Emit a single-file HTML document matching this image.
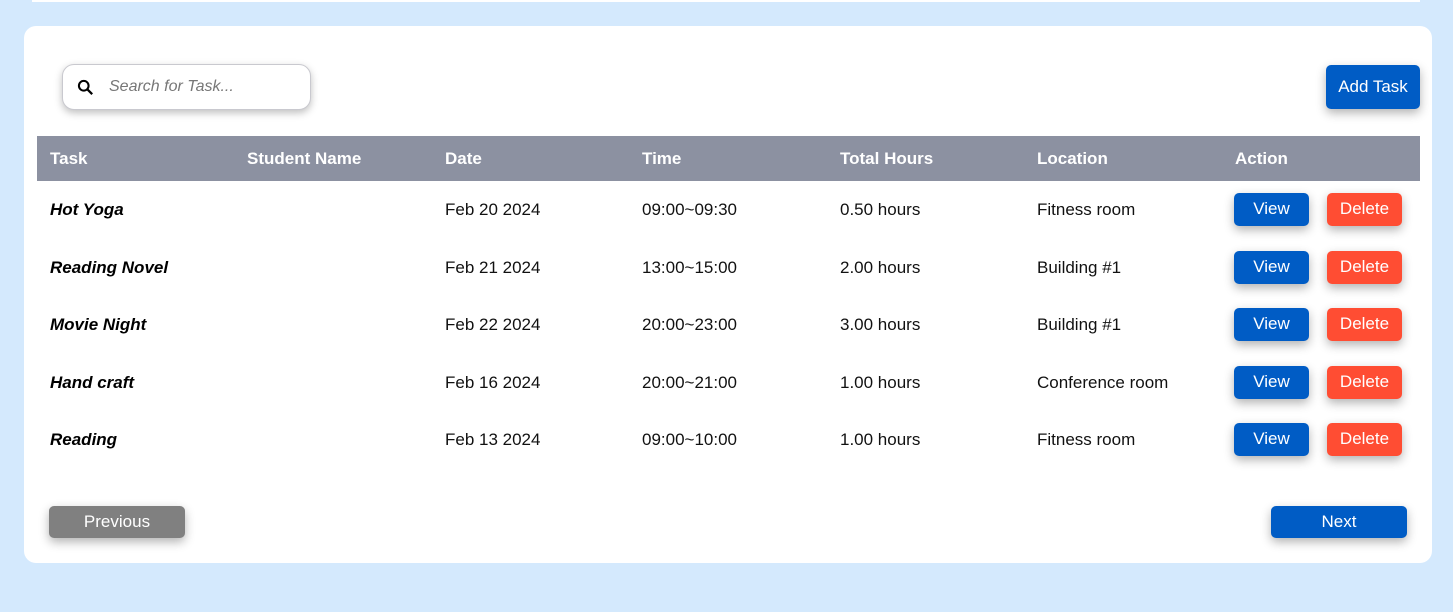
<!DOCTYPE html>
<html><head><meta charset="utf-8"><style>
*{margin:0;padding:0;box-sizing:border-box}
body{width:1453px;height:612px;background:#d4e9fd;font-family:"Liberation Sans",Arial,sans-serif;position:relative;overflow:hidden}
.top{position:absolute;left:32px;top:0;width:1388px;height:2px;background:#fff}
.card{position:absolute;left:24px;top:26px;width:1408px;height:537px;background:#fff;border-radius:12px}
.search{position:absolute;left:62px;top:64px;width:249px;height:46px;border:1px solid #c9c9cf;border-radius:12px;box-shadow:0 3px 8px rgba(0,0,0,.25);background:#fff}
.search svg{position:absolute;left:14px;top:14px}
.search span{position:absolute;left:46px;top:13px;font-size:16px;font-style:italic;color:#777}
.btn{position:absolute;color:#fff;font-size:16px;text-align:center;border-radius:5px;box-shadow:0 4px 10px rgba(0,0,0,.3)}
.blue{background:#005cc5}
.red{background:#ff4d33}
.gray{background:#808080}
.head{position:absolute;left:37px;top:136px;width:1383px;height:45px;background:#8c91a1}
.hc{position:absolute;top:149px;color:#fff;font-weight:bold;font-size:17px}
.c{position:absolute;font-size:17px;color:#111}
.t{font-weight:bold;font-style:italic;color:#000}
</style></head><body>
<div class="top"></div>
<div class="card"></div>
<div class="search"><svg width="18" height="18" viewBox="0 0 16 16"><circle cx="6" cy="6" r="4.3" fill="none" stroke="#000" stroke-width="1.8"/><path d="M9.2 9.2L13.5 13.5" stroke="#000" stroke-width="2"/></svg><span>Search for Task...</span></div>
<div class="btn blue" style="left:1326px;top:65px;width:94px;height:44px;line-height:44px;font-size:17px">Add Task</div>
<div class="head"></div>
<div class="hc" style="left:50px">Task</div>
<div class="hc" style="left:247px">Student Name</div>
<div class="hc" style="left:445px">Date</div>
<div class="hc" style="left:642px">Time</div>
<div class="hc" style="left:840px">Total Hours</div>
<div class="hc" style="left:1037px">Location</div>
<div class="hc" style="left:1235px">Action</div>

<div class="c t" style="left:50px;top:200px">Hot Yoga</div>
<div class="c" style="left:445px;top:200px">Feb 20 2024</div>
<div class="c" style="left:642px;top:200px">09:00~09:30</div>
<div class="c" style="left:840px;top:200px">0.50 hours</div>
<div class="c" style="left:1037px;top:200px">Fitness room</div>
<div class="btn blue" style="left:1234px;top:193px;width:75px;height:33px;line-height:31px;font-size:17px">View</div>
<div class="btn red" style="left:1327px;top:193px;width:75px;height:33px;line-height:31px;font-size:17px">Delete</div>

<div class="c t" style="left:50px;top:258px">Reading Novel</div>
<div class="c" style="left:445px;top:258px">Feb 21 2024</div>
<div class="c" style="left:642px;top:258px">13:00~15:00</div>
<div class="c" style="left:840px;top:258px">2.00 hours</div>
<div class="c" style="left:1037px;top:258px">Building #1</div>
<div class="btn blue" style="left:1234px;top:251px;width:75px;height:33px;line-height:31px;font-size:17px">View</div>
<div class="btn red" style="left:1327px;top:251px;width:75px;height:33px;line-height:31px;font-size:17px">Delete</div>

<div class="c t" style="left:50px;top:315px">Movie Night</div>
<div class="c" style="left:445px;top:315px">Feb 22 2024</div>
<div class="c" style="left:642px;top:315px">20:00~23:00</div>
<div class="c" style="left:840px;top:315px">3.00 hours</div>
<div class="c" style="left:1037px;top:315px">Building #1</div>
<div class="btn blue" style="left:1234px;top:308px;width:75px;height:33px;line-height:31px;font-size:17px">View</div>
<div class="btn red" style="left:1327px;top:308px;width:75px;height:33px;line-height:31px;font-size:17px">Delete</div>

<div class="c t" style="left:50px;top:373px">Hand craft</div>
<div class="c" style="left:445px;top:373px">Feb 16 2024</div>
<div class="c" style="left:642px;top:373px">20:00~21:00</div>
<div class="c" style="left:840px;top:373px">1.00 hours</div>
<div class="c" style="left:1037px;top:373px">Conference room</div>
<div class="btn blue" style="left:1234px;top:366px;width:75px;height:33px;line-height:31px;font-size:17px">View</div>
<div class="btn red" style="left:1327px;top:366px;width:75px;height:33px;line-height:31px;font-size:17px">Delete</div>

<div class="c t" style="left:50px;top:430px">Reading</div>
<div class="c" style="left:445px;top:430px">Feb 13 2024</div>
<div class="c" style="left:642px;top:430px">09:00~10:00</div>
<div class="c" style="left:840px;top:430px">1.00 hours</div>
<div class="c" style="left:1037px;top:430px">Fitness room</div>
<div class="btn blue" style="left:1234px;top:423px;width:75px;height:33px;line-height:31px;font-size:17px">View</div>
<div class="btn red" style="left:1327px;top:423px;width:75px;height:33px;line-height:31px;font-size:17px">Delete</div>

<div class="btn gray" style="left:49px;top:506px;width:136px;height:32px;line-height:31px;font-size:17px">Previous</div>
<div class="btn blue" style="left:1271px;top:506px;width:136px;height:32px;line-height:31px;font-size:17px">Next</div>
</body></html>
